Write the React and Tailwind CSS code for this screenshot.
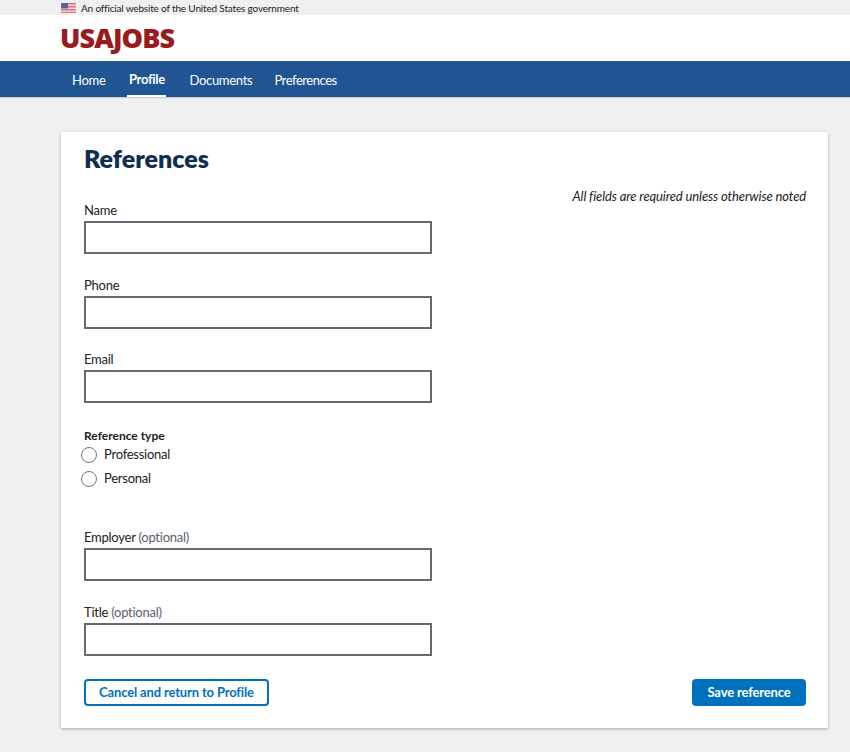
import React from 'react';

function Field({ label, optional, className }) {
  return (
    <div className={className}>
      <label className="block h-[19px] text-[13px] leading-[19px] tracking-[-0.25px] text-[#212121]">
        {label}
        {optional && <span className="text-[#5b616b]"> (optional)</span>}
      </label>
      <input type="text" className="block mt-[1px] w-[348px] h-[33px] border-2 border-[#666a70] bg-white outline-none" />
    </div>
  );
}

function Radio({ label, className }) {
  return (
    <label className={`flex items-center h-[19px] ${className}`}>
      <span className="ml-[-3px] w-[16px] h-[16px] rounded-full border border-[#757575] bg-white shrink-0" />
      <span className="ml-[7px] text-[13px] leading-[19px] tracking-[-0.25px] text-[#212121]">{label}</span>
    </label>
  );
}

function Flag() {
  return (
    <svg width="15" height="10" viewBox="0 0 15 10" className="shrink-0">
      <rect width="15" height="10" fill="#f4dfe0" />
      <rect y="0" width="15" height="1.5" fill="#de7078" />
      <rect y="3" width="15" height="1.5" fill="#de7078" />
      <rect y="6" width="15" height="1.5" fill="#de7078" />
      <rect y="8.8" width="15" height="1.2" fill="#de7078" />
      <rect width="7" height="5.5" fill="#5a62a0" />
    </svg>
  );
}

export default function App() {
  return (
    <div className="min-h-[752px] bg-[#f0f0f0] font-['Lato','Noto_Sans',sans-serif]">
      <div className="h-[15px] pl-[61px] flex items-center gap-[5px] bg-[#f0f0f0]">
        <Flag />
        <span className="text-[10px] leading-[14px] text-[#212121] tracking-[-0.17px]">An official website of the United States government</span>
      </div>

      <header className="h-[46px] bg-white pl-[60px] flex items-start">
        <span className="mt-[3px] text-[27px] leading-[40px] font-extrabold tracking-[-0.9px] text-[#981b1e] font-['Open_Sans',sans-serif]">USAJOBS</span>
      </header>

      <nav className="h-[36px] bg-[#205493] pl-[72px] flex items-stretch gap-[22px] text-[13px] tracking-[-0.3px] text-white shadow-[0_1px_1px_rgba(0,0,0,0.15)]">
        <a className="flex items-center pt-[3px]">Home</a>
        <a className="flex items-center justify-center w-[39px] font-bold border-b-2 border-white pt-[4px]">Profile</a>
        <a className="flex items-center pt-[3px] ml-[1px]">Documents</a>
        <a className="flex items-center pt-[3px] tracking-[-0.45px]">Preferences</a>
      </nav>

      <main className="ml-[61px] mt-[35px] w-[767px] h-[596px] bg-white shadow-[0_1px_3px_rgba(0,0,0,0.3)] pl-[23px] pr-[22px] pt-[8px]">
        <h1 className="text-[25px] leading-[36px] font-extrabold text-[#112e51]">References</h1>
        <p className="mt-[10px] h-[20px] text-right italic text-[13px] leading-[20px] tracking-[-0.12px] text-[#212121]">
          All fields are required unless otherwise noted
        </p>

        <Field label="Name" className="mt-[-5px]" />
        <Field label="Phone" className="mt-[22px]" />
        <Field label="Email" className="mt-[21px]" />

        <div className="mt-[23px]">
          <div className="text-[12px] leading-[19px] font-bold text-[#212121]">Reference type</div>
          <Radio label="Professional" />
          <Radio label="Personal" className="mt-[5px]" />
        </div>

        <Field label="Employer" optional className="mt-[40px]" />
        <Field label="Title" optional className="mt-[22px]" />

        <div className="mt-[23px] flex items-center justify-between">
          <button className="w-[185px] h-[27px] rounded-[4px] border-2 border-[#0071bc] bg-white text-[13px] tracking-[-0.15px] font-bold text-[#0071bc]">
            Cancel and return to Profile
          </button>
          <button className="w-[114px] h-[27px] rounded-[4px] bg-[#0071bc] text-[13px] tracking-[-0.15px] font-bold text-white">
            Save reference
          </button>
        </div>
      </main>
    </div>
  );
}
